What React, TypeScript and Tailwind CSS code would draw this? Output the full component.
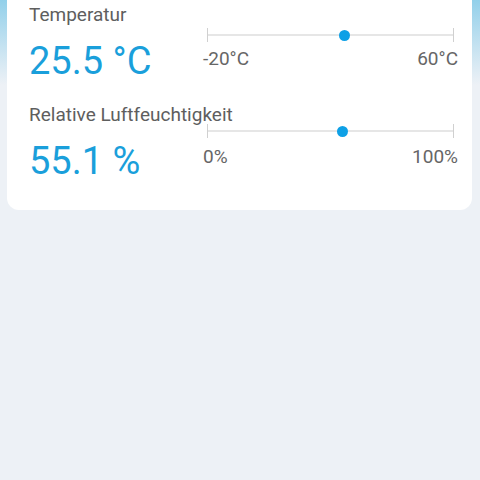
import React from "react";

type RowProps = {
  label: string;
  value: string;
  min: string;
  max: string;
  frac: number;
  valueGap: string;
  sliderPad: string;
  scaleGap: string;
};

function Row({ label, value, min, max, frac, valueGap, sliderPad, scaleGap }: RowProps) {
  return (
    <div className="flex">
      <div className="w-[174px] shrink-0 flex flex-col">
        <div className="text-[19px] leading-[24px] text-[#5e5e5e] whitespace-nowrap">{label}</div>
        <div className={`${valueGap} text-[38px] leading-[44px] text-[#1a9fdb] whitespace-nowrap`}>{value}</div>
      </div>
      <div className={`flex-1 flex flex-col ${sliderPad}`}>
        <div className="relative h-[14px] mx-[4px]">
          <div className="absolute left-0 right-0 top-[6px] h-[2px] bg-[#e6e6e6]" />
          <div className="absolute left-0 top-0 h-[14px] w-[1px] bg-[#d0d0d0]" />
          <div className="absolute right-0 top-0 h-[14px] w-[1px] bg-[#d0d0d0]" />
          <div
            className="absolute top-[1.5px] w-[11px] h-[11px] rounded-full bg-[#0ea0e6]"
            style={{ left: `calc(${frac * 100}% - 5.5px)` }}
          />
        </div>
        <div className={`${scaleGap} flex justify-between text-[19px] leading-[20px] text-[#666666]`}>
          <span>{min}</span>
          <span>{max}</span>
        </div>
      </div>
    </div>
  );
}

export default function App() {
  return (
    <div
      className="relative w-[480px] h-[480px] overflow-hidden bg-[#edf1f6]"
      style={{ fontFamily: "Roboto, 'Noto Sans', sans-serif" }}
    >
      <div className="absolute inset-x-0 top-0 h-[85px] bg-gradient-to-b from-[#92d0ea] to-[#edf1f6]" />
      <div className="relative mx-[7px] w-[465px] bg-white rounded-b-[12px] pl-[22px] pr-[14px] pt-[3px] pb-[27px]">
        <Row
          label="Temperatur"
          value="25.5 °C"
          min="-20°C"
          max="60°C"
          frac={0.557}
          valueGap="mt-[12px]"
          sliderPad="pt-[25px]"
          scaleGap="mt-[7px]"
        />
        <div className="h-[20px]" />
        <Row
          label="Relative Luftfeuchtigkeit"
          value="55.1 %"
          min="0%"
          max="100%"
          frac={0.548}
          valueGap="mt-[12px]"
          sliderPad="pt-[21px]"
          scaleGap="mt-[9px]"
        />
      </div>
    </div>
  );
}
